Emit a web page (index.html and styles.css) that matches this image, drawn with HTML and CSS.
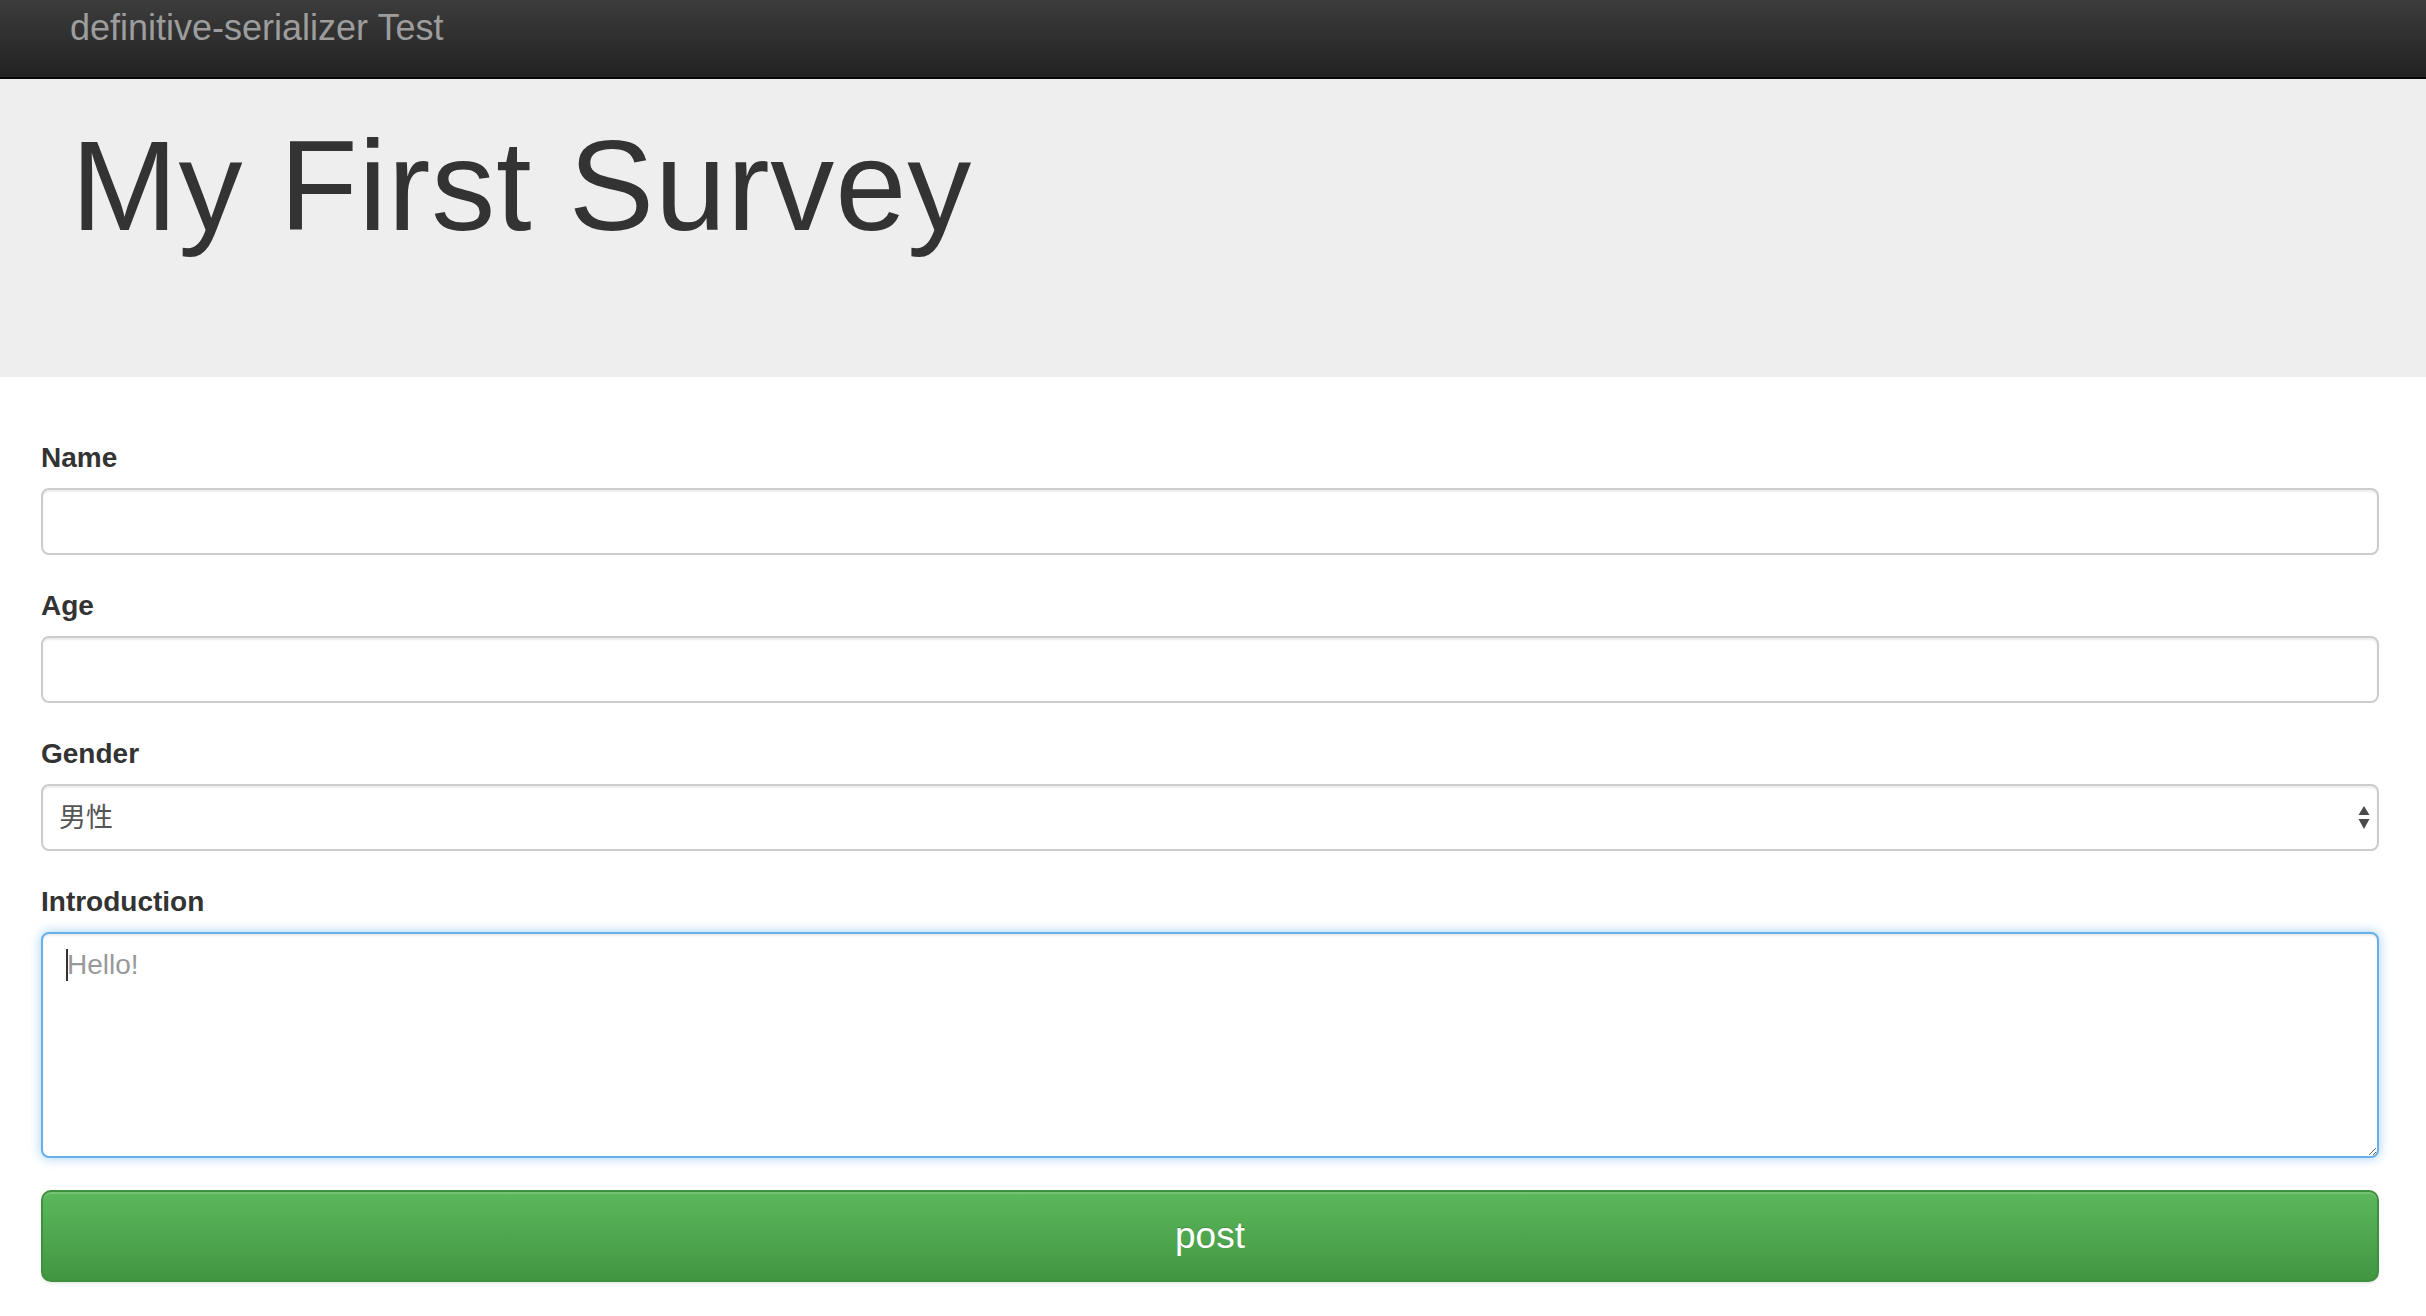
FILE: index.html
```html
<!DOCTYPE html>
<html lang="en">
<head>
<meta charset="utf-8">
<title>definitive-serializer Test</title>
<link rel="stylesheet" href="styles.css">
</head>
<body>
<nav class="navbar">
  <a class="brand" href="#">definitive-serializer Test</a>
</nav>
<header class="jumbotron">
  <h1 class="title">My First Survey</h1>
</header>
<form class="survey">
  <div class="group">
    <label class="label" for="name">Name</label>
    <input class="control" id="name" type="text">
  </div>
  <div class="group">
    <label class="label" for="age">Age</label>
    <input class="control" id="age" type="text">
  </div>
  <div class="group">
    <label class="label" for="gender">Gender</label>
    <div class="select-wrap">
      <select class="control select" id="gender">
        <option>男性</option>
        <option>女性</option>
      </select>
      <svg class="select-arrows" width="12" height="26" viewBox="0 0 12 26" aria-hidden="true">
        <path d="M6 1 L11.5 10 L0.5 10 Z" fill="#4a4a4a"/>
        <path d="M0.5 14 L11.5 14 L6 24 Z" fill="#4a4a4a"/>
      </svg>
    </div>
  </div>
  <div class="group">
    <label class="label" for="intro">Introduction</label>
    <div class="area-wrap">
      <textarea class="control area" id="intro" placeholder="Hello!"></textarea>
      <span class="caret"></span>
    </div>
  </div>
  <button class="btn-post" type="button">post</button>
</form>
</body>
</html>
```
FILE: styles.css
```css
html, body {
  margin: 0;
  padding: 0;
  background: #ffffff;
}
body {
  font-family: "Liberation Sans", Arial, "Noto Sans CJK JP", sans-serif;
  color: #333333;
}
.navbar {
  box-sizing: content-box;
  height: 67px;
  padding: 10px 0 0 70px;
  border-bottom: 2px solid #080808;
  background: linear-gradient(to bottom, #3c3c3c 0%, #222222 100%);
}
.brand {
  display: block;
  color: #9d9d9d;
  font-size: 36px;
  line-height: 36px;
  text-decoration: none;
}
.jumbotron {
  background: #eeeeee;
  height: 298px;
  box-sizing: border-box;
  padding: 44px 0 0 71px;
}
.title {
  margin: 0;
  font-size: 128px;
  line-height: 126px;
  font-weight: normal;
  color: #333333;
  letter-spacing: 0.8px;
}
.survey {
  padding: 65px 47px 40px 41px;
  display: flex;
  flex-direction: column;
}
.group {
  display: flex;
  flex-direction: column;
  margin-bottom: 35px;
}
.group:last-of-type {
  margin-bottom: 32px;
}
.label {
  display: block;
  font-size: 28px;
  line-height: 32px;
  font-weight: bold;
  color: #333333;
  margin-bottom: 14px;
}
.control {
  display: block;
  width: 100%;
  box-sizing: border-box;
  height: 67px;
  margin: 0;
  border: 2px solid #cccccc;
  border-radius: 8px;
  background: #ffffff;
  box-shadow: inset 0 2px 2px rgba(0, 0, 0, 0.075);
  font-family: "Liberation Sans", Arial, "Noto Sans CJK JP", sans-serif;
  font-size: 28px;
  color: #555555;
  padding: 0 18px;
  outline: none;
}
.select-wrap,
.area-wrap {
  position: relative;
}
.select {
  -webkit-appearance: none;
  appearance: none;
  padding: 0 16px 5px 16px;
  font-family: "Noto Sans CJK JP", "Liberation Sans", sans-serif;
  font-size: 27px;
}
.select-arrows {
  position: absolute;
  right: 9px;
  top: 21px;
  pointer-events: none;
}
.area {
  height: 226px;
  padding: 11px 24px;
  line-height: 40px;
  resize: vertical;
  border-color: #66afe9;
  box-shadow: inset 0 2px 2px rgba(0, 0, 0, 0.075), 0 0 12px rgba(102, 175, 233, 0.6);
}
.area::placeholder {
  color: #999999;
}
.caret {
  position: absolute;
  left: 25px;
  top: 17px;
  width: 2px;
  height: 32px;
  background: #333333;
}
.btn-post {
  display: block;
  width: 100%;
  height: 92px;
  box-sizing: border-box;
  border: 2px solid #3e8f3e;
  border-radius: 10px;
  background: linear-gradient(to bottom, #5cb85c 0%, #419641 100%);
  box-shadow: inset 0 2px 0 rgba(255, 255, 255, 0.15), 0 2px 2px rgba(0, 0, 0, 0.075);
  color: #ffffff;
  font-family: "Liberation Sans", Arial, sans-serif;
  font-size: 37px;
  text-shadow: 0 -1px 0 rgba(0, 0, 0, 0.2);
  padding: 0;
  cursor: pointer;
}
```
